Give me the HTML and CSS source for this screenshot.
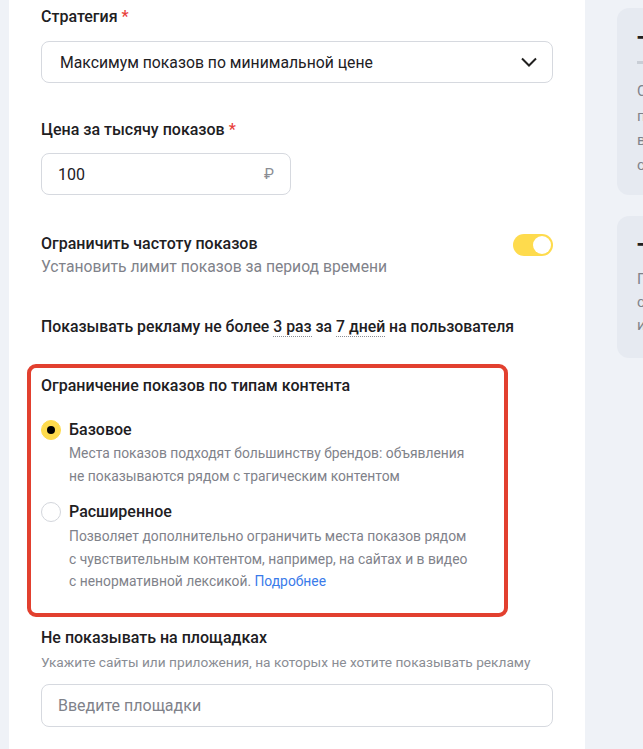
FILE: index.html
```html
<!DOCTYPE html>
<html lang="ru">
<head>
<meta charset="utf-8">
<title>Стратегия</title>
<link rel="stylesheet" href="styles.css">
</head>
<body>
<div class="layout">
  <div class="strip"></div>
  <main class="panel">
    <div class="label">Стратегия <span class="req">*</span></div>
    <div class="select">
      <span>Максимум показов по минимальной цене</span>
      <svg class="chev" width="18" height="12" viewBox="0 0 18 12"><path d="M2 2.5l7 7 7-7" fill="none" stroke="#21201f" stroke-width="2"/></svg>
    </div>

    <div class="label label-gap">Цена за тысячу показов <span class="req">*</span></div>
    <div class="input price">
      <span>100</span>
      <span class="rub">₽</span>
    </div>

    <div class="toggle-row">
      <div>
        <div class="row-title">Ограничить частоту показов</div>
        <div class="row-sub">Установить лимит показов за период времени</div>
      </div>
      <div class="toggle"><div class="knob"></div></div>
    </div>

    <div class="freq">Показывать рекламу не более <span class="dotted">3 раз</span> за <span class="dotted">7 дней</span> на пользователя</div>

    <section class="highlight">
      <div class="sec-title">Ограничение показов по типам контента</div>
      <div class="radio-item first">
        <div class="radio checked"><div class="dot"></div></div>
        <div>
          <div class="radio-title">Базовое</div>
          <div class="radio-desc">Места показов подходят большинству брендов: объявления<br>не показываются рядом с трагическим контентом</div>
        </div>
      </div>
      <div class="radio-item">
        <div class="radio"></div>
        <div>
          <div class="radio-title">Расширенное</div>
          <div class="radio-desc">Позволяет дополнительно ограничить места показов рядом<br>с чувствительным контентом, например, на сайтах и в видео<br>с ненормативной лексикой. <a class="link" href="#">Подробнее</a></div>
        </div>
      </div>
    </section>

    <div class="label block-gap">Не показывать на площадках</div>
    <div class="hint">Укажите сайты или приложения, на которых не хотите показывать рекламу</div>
    <div class="input sites"><span class="placeholder">Введите площадки</span></div>
  </main>
  <aside class="aside">
    <div class="card card1">
      <div class="card-title">Тип стратегии</div>
      <div class="card-line"></div>
      <p class="card-text">Стратегия<br>позволяет<br>выбрать<br>способ</p>
    </div>
    <div class="card card2">
      <div class="card-title">Тематика</div>
      <p class="card-text">Показы<br>списываются<br>их</p>
    </div>
  </aside>
</div>
</body>
</html>
```

FILE: styles.css
```css
html, body {
  margin: 0;
  padding: 0;
  height: 100%;
  overflow: hidden;
}
body {
  background: #eff2f7;
  font-family: Roboto, "Noto Sans", Arial, sans-serif;
  color: #21201f;
}
.layout {
  display: flex;
  height: 749px;
}
.strip {
  width: 9px;
  flex: none;
}
.panel {
  width: 576px;
  flex: none;
  background: #fff;
  padding: 7px 32px 0 32px;
  box-sizing: border-box;
}
.label {
  font-size: 16px;
  font-weight: 500;
  line-height: 20px;
  margin-bottom: 14px;
}
.req { color: #e8413b; }
.label-gap { margin-top: 37px; margin-bottom: 13px; }
.select, .input {
  box-sizing: border-box;
  border: 1px solid #d6d9df;
  border-radius: 8px;
  display: flex;
  align-items: center;
  font-size: 16px;
}
.select {
  height: 42px;
  width: 512px;
  padding: 0 14px 0 18px;
  justify-content: space-between;
  font-size: 15.75px;
}
.chev { display: block; }
.price {
  height: 42px;
  width: 250px;
  padding: 0 16px 0 16px;
  justify-content: space-between;
}
.rub { color: #8a8d94; font-size: 15px; }
.toggle-row {
  margin-top: 38px;
  display: flex;
  justify-content: space-between;
  align-items: flex-start;
  width: 512px;
}
.row-title {
  font-size: 16px;
  font-weight: 500;
  line-height: 22px;
}
.row-sub {
  font-size: 15.7px;
  line-height: 24px;
  color: #7f828a;
}
.toggle {
  width: 40px;
  height: 22px;
  border-radius: 11px;
  background: #fedb4d;
  margin-top: 1px;
  display: flex;
  justify-content: flex-end;
  align-items: center;
  padding: 2px;
  box-sizing: border-box;
}
.knob {
  width: 18px;
  height: 18px;
  border-radius: 50%;
  background: #fff;
}
.freq {
  margin-top: 37px;
  font-size: 15.8px;
  font-weight: 500;
  line-height: 22px;
}
.dotted {
  border-bottom: 1px dotted #8a8d94;
}
.highlight {
  margin: 26px 0 0 -14px;
  width: 481px;
  box-sizing: border-box;
  border: 4px solid #e2402f;
  border-radius: 9px;
  padding: 8px 10px 20px 10px;
}
.sec-title {
  font-size: 16px;
  font-weight: 500;
  line-height: 20px;
}
.radio-item {
  display: flex;
  gap: 8px;
  margin-top: 14px;
}
.radio-item.first { margin-top: 23px; }
.radio {
  width: 20px;
  height: 20px;
  border-radius: 50%;
  box-sizing: border-box;
  border: 1px solid #d3d6dc;
  background: #fff;
  flex: none;
  margin-top: 1px;
  display: flex;
  align-items: center;
  justify-content: center;
}
.radio.checked {
  background: #fedb4d;
  border-color: #fedb4d;
}
.dot {
  width: 8px;
  height: 8px;
  border-radius: 50%;
  background: #000;
}
.radio-title {
  font-size: 16px;
  font-weight: 500;
  line-height: 22px;
}
.radio-desc {
  font-size: 13.85px;
  line-height: 22.5px;
  color: #7f828a;
  margin-top: 1px;
}
.radio-item + .radio-item .radio-desc { margin-top: 2px; }
.link {
  color: #3a7bea;
  text-decoration: none;
}
.block-gap { margin-top: 11px; margin-bottom: 5px; }
.hint {
  font-size: 13.7px;
  line-height: 18px;
  color: #8a8d94;
}
.sites {
  margin-top: 13px;
  height: 43px;
  width: 512px;
  padding: 0 16px;
}
.placeholder { color: #7f828a; font-size: 16px; }
.aside {
  flex: 1;
  min-width: 0;
  overflow: hidden;
  padding: 8px 0 0 32px;
}
.card {
  width: 300px;
  background: #e6eaf1;
  border-radius: 12px;
  padding: 25px 20px 0 20px;
  box-sizing: border-box;
}
.card1 { height: 187px; }
.card2 { height: 142px; margin-top: 21px; padding-top: 24px; }
.card-title {
  font-size: 28px;
  font-weight: 500;
  line-height: 28px;
}
.card-line {
  height: 3px;
  width: 100px;
  background: #c9ced6;
  margin-top: 0;
}
.card-text {
  margin: 15px 0 0 0;
  font-size: 15px;
  line-height: 24.5px;
  color: #7f828a;
}
.card2 .card-text { margin-top: 0; line-height: 23px; }
```
